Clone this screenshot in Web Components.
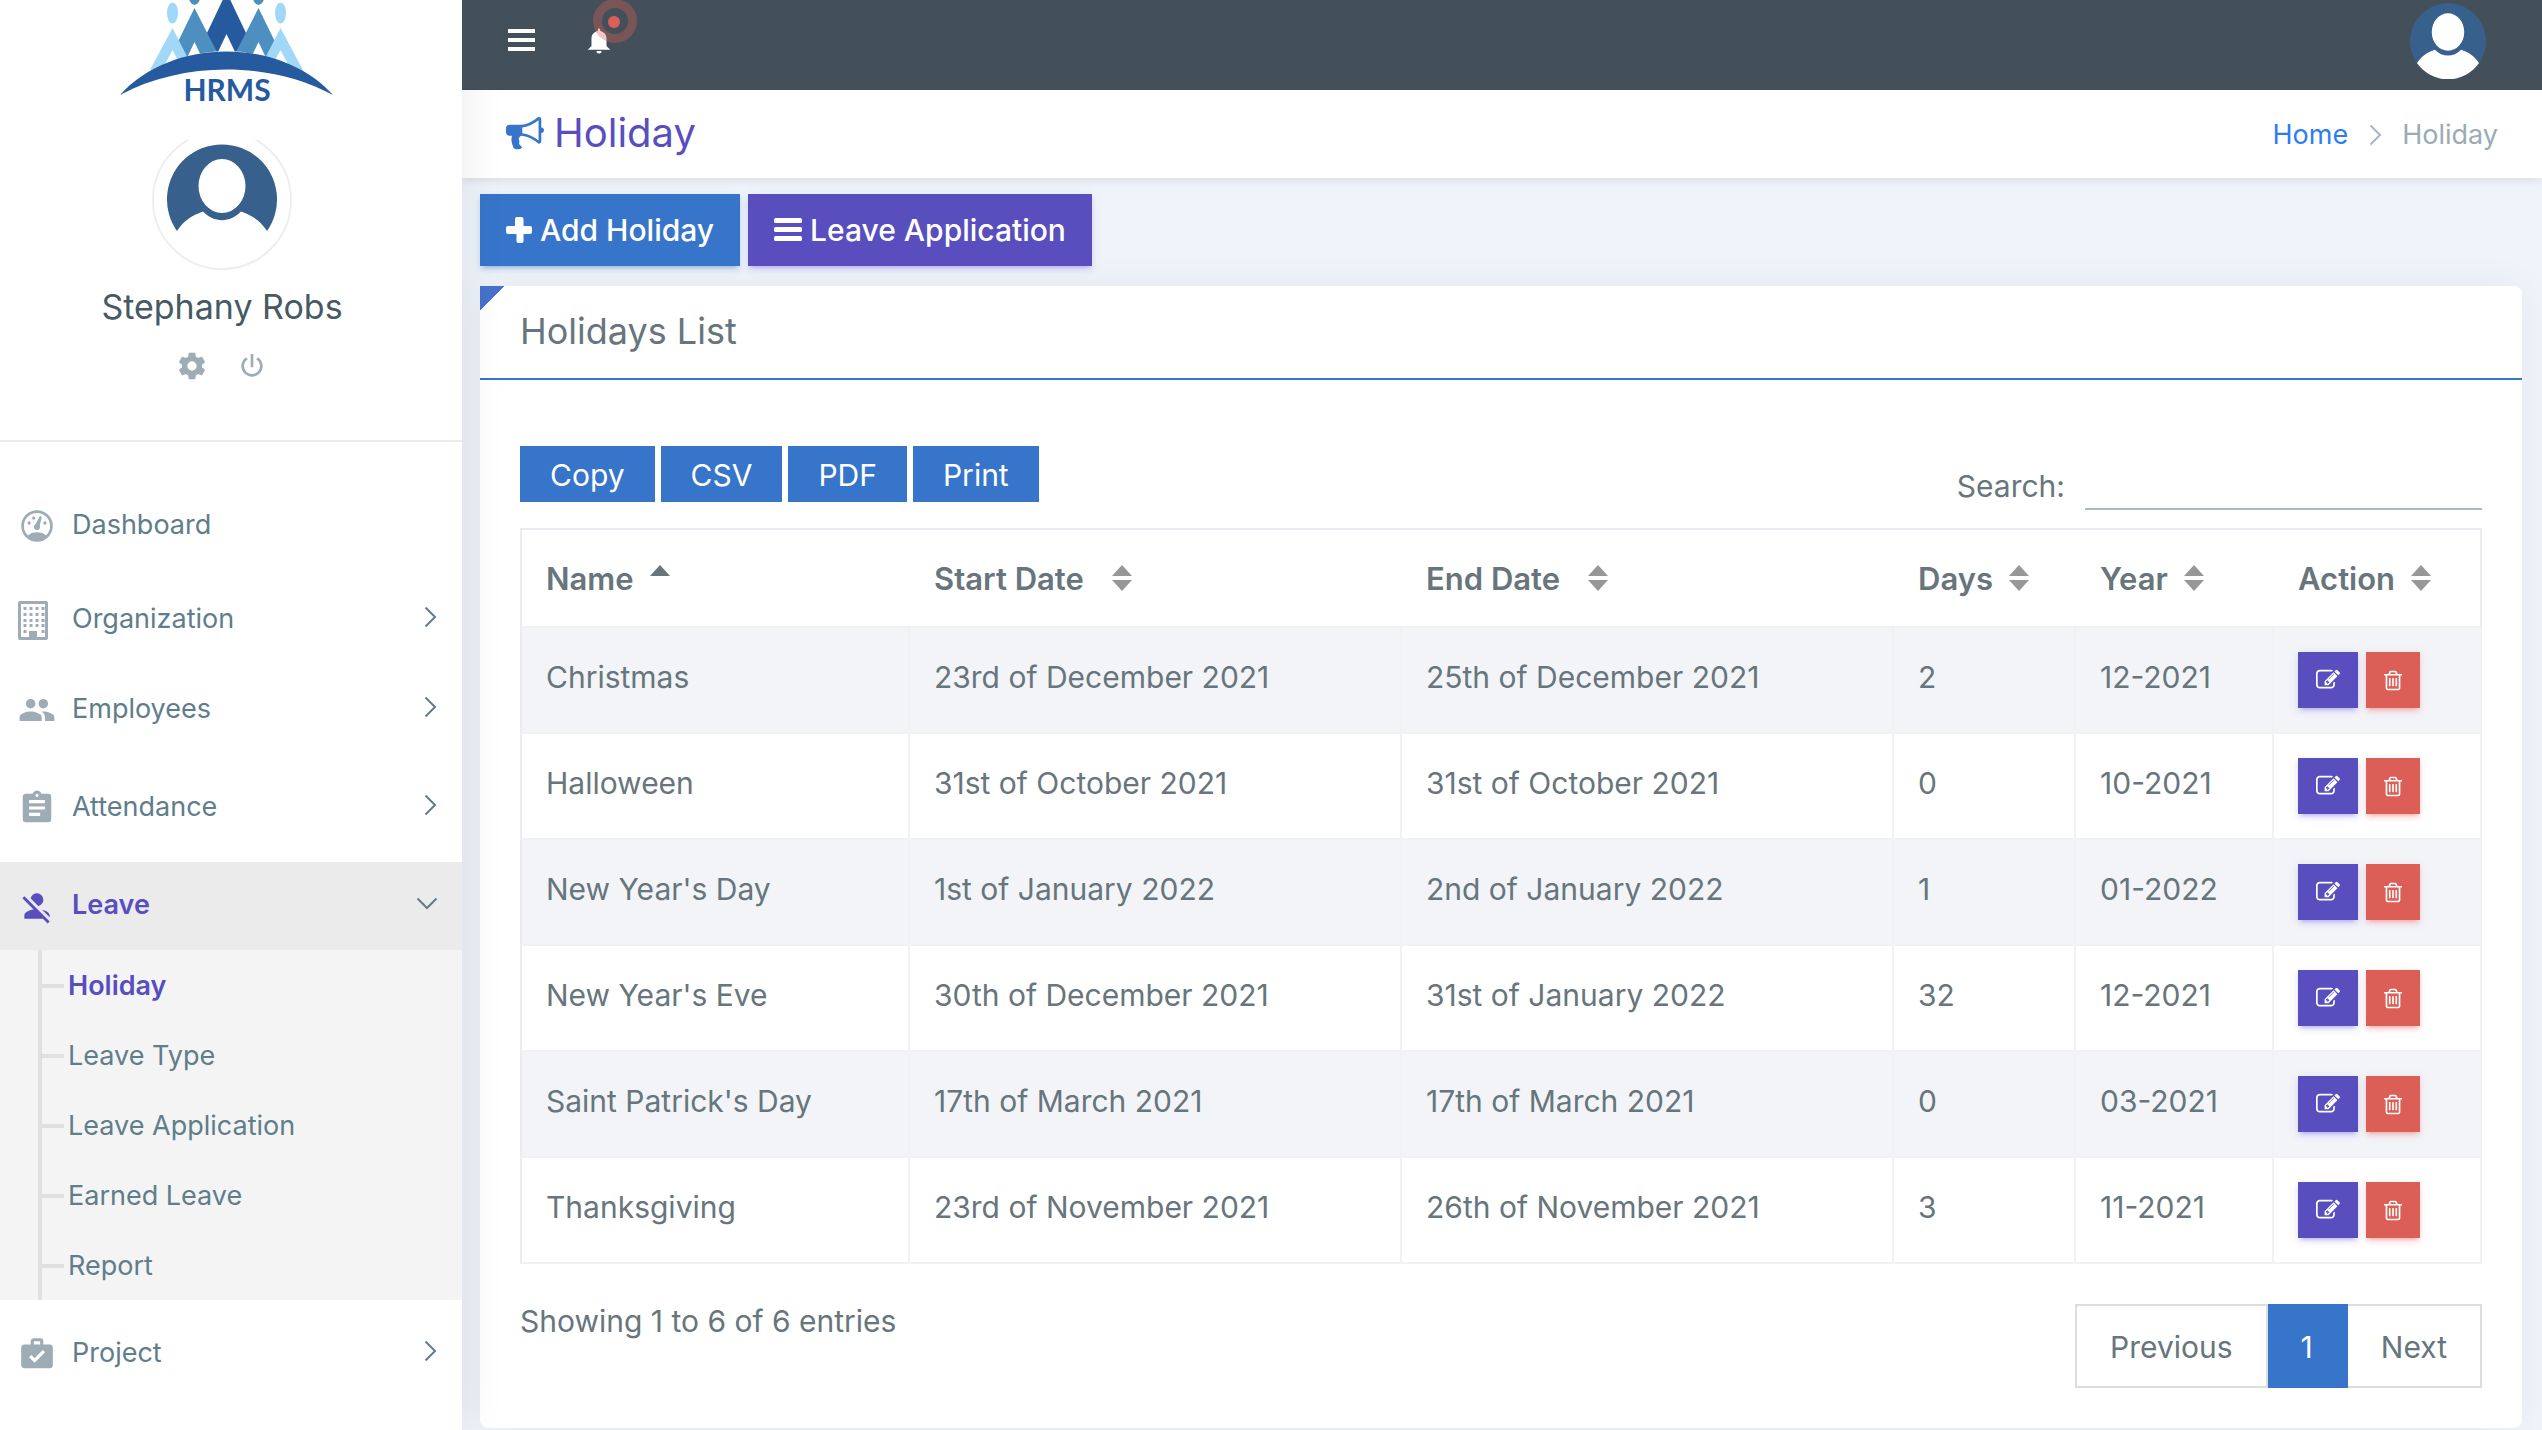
<!DOCTYPE html>
<html lang="en">
<head>
<meta charset="utf-8">
<title>HRMS - Holiday</title>
<style>
  :root {
    --blue: #3775ca;
    --purple: #594ebe;
    --red: #dc5f57;
    --text: #67757c;
    --muted: #99abb4;
    --nav: #607d8b;
  }
  body {
    margin: 0;
    background: #eef4f9;
    color: var(--text);
    font: 400 30px/50px Inter, "Liberation Sans", sans-serif;
  }
</style>
</head>
<body>
<hrms-app></hrms-app>
<script>
const define = (name, html, setup) => {
  const template = document.createElement('template');
  template.innerHTML = html;
  customElements.define(name, class extends HTMLElement {
    connectedCallback() {
      if (this.shadowRoot) return;
      this.attachShadow({ mode: 'open' }).append(template.content.cloneNode(true));
      if (setup) setup(this, this.shadowRoot);
    }
  });
};

const dots = [7, 13, 19, 25].map(x => [6, 12, 18, 23, 29].map(y =>
  (y === 29 && x > 7 && x < 25) ? '' : `<rect x="${x - 3}" y="${y}" width="3" height="3"/>`).join('')).join('');

const ICONS = {
  cog: ['0 0 24 24', '<path d="M12,15.5A3.5,3.5 0 0,1 8.5,12A3.5,3.5 0 0,1 12,8.5A3.5,3.5 0 0,1 15.5,12A3.5,3.5 0 0,1 12,15.5M19.43,12.97C19.47,12.65 19.5,12.33 19.5,12C19.5,11.67 19.47,11.34 19.43,11L21.54,9.37C21.73,9.22 21.78,8.95 21.66,8.73L19.66,5.27C19.54,5.05 19.27,4.96 19.05,5.05L16.56,6.05C16.04,5.66 15.5,5.32 14.87,5.07L14.5,2.42C14.46,2.18 14.25,2 14,2H10C9.75,2 9.54,2.18 9.5,2.42L9.13,5.07C8.5,5.32 7.96,5.66 7.44,6.05L4.95,5.05C4.73,4.96 4.46,5.05 4.34,5.27L2.34,8.73C2.21,8.95 2.27,9.22 2.46,9.37L4.57,11C4.53,11.34 4.5,11.67 4.5,12C4.5,12.33 4.53,12.65 4.57,12.97L2.46,14.63C2.27,14.78 2.21,15.05 2.34,15.27L4.34,18.73C4.46,18.95 4.73,19.03 4.95,18.95L7.44,17.94C7.96,18.34 8.5,18.68 9.13,18.93L9.5,21.58C9.54,21.82 9.75,22 10,22H14C14.25,22 14.46,21.82 14.5,21.58L14.87,18.93C15.5,18.67 16.04,18.34 16.56,17.94L19.05,18.95C19.27,19.03 19.54,18.95 19.66,18.73L21.66,15.27C21.78,15.05 21.73,14.78 21.54,14.63L19.43,12.97Z"/>'],
  power: ['0 0 24 24', '<path d="M16.56,5.44L15.11,6.89C16.84,7.94 18,9.83 18,12A6,6 0 0,1 12,18A6,6 0 0,1 6,12C6,9.83 7.16,7.94 8.88,6.88L7.44,5.44C5.36,6.88 4,9.28 4,12A8,8 0 0,0 12,20A8,8 0 0,0 20,12C20,9.28 18.64,6.88 16.56,5.44M13,3H11V13H13"/>'],
  gauge: ['0 0 24 24', '<circle cx="12" cy="12" r="9.1" fill="none" stroke="currentColor" stroke-width="1.7"/><path d="M5.6 18.6C7.5 16.6 9.6 16 12 16s4.500.6 6.400 2.600A9.200 9.200 0 0 1 5.600 18.600Z"/><circle cx="12" cy="12.600" r="1.900"/><path d="M10.600 12 13.400 6.300a.8.8 0 0 1 1.500.6L13.400 13Z"/><circle cx="7" cy="10.100" r="1.050"/><circle cx="9.900" cy="7" r="1.050"/><circle cx="17" cy="10.100" r="1.050"/>'],
  building: ['0 0 30 39', '<path d="M2 0H28a2 2 0 0 1 2 2V37a2 2 0 0 1-2 2H2a2 2 0 0 1-2-2V2a2 2 0 0 1 2-2ZM3 3V36H11V30H19V36H27V3Z" fill-rule="evenodd"/><g transform="translate(1.500 0)">' + dots + '</g>'],
  people: ['0 0 24 24', '<path d="M16,13C15.71,13 15.38,13 15.03,13.05C16.19,13.89 17,15 17,16.5V19H23V16.5C23,14.17 18.33,13 16,13M8,13C5.67,13 1,14.17 1,16.5V19H15V16.5C15,14.17 10.33,13 8,13M8,11A3,3 0 0,0 11,8A3,3 0 0,0 8,5A3,3 0 0,0 5,8A3,3 0 0,0 8,11M16,11A3,3 0 0,0 19,8A3,3 0 0,0 16,5A3,3 0 0,0 13,8A3,3 0 0,0 16,11Z"/>'],
  clipboard: ['0 0 24 24', '<path d="M17,9H7V7H17M17,13H7V11H17M14,17H7V15H14M12,3A1,1 0 0,1 13,4A1,1 0 0,1 12,5A1,1 0 0,1 11,4A1,1 0 0,1 12,3M19,3H14.82C14.4,1.84 13.3,1 12,1C10.7,1 9.6,1.84 9.18,3H5A2,2 0 0,0 3,5V19A2,2 0 0,0 5,21H19A2,2 0 0,0 21,19V5A2,2 0 0,0 19,3Z"/>'],
  away: ['0 0 24 24', '<path d="M12,4A4,4 0 0,1 16,8C16,9.95 14.6,11.58 12.75,11.93L8.07,7.25C8.42,5.4 10.05,4 12,4M12.28,14L18.28,20L20,21.72L18.73,23L15.73,20H4V18C4,16.16 6.5,14.61 9.87,14.14L2.78,7.05L4.05,5.78L12.28,14M20,18V19.18L15.14,14.32C18,14.93 20,16.35 20,18Z"/>'],
  briefcase: ['0 0 24 24', '<path d="M10,2H14A2,2 0 0,1 16,4V6H20A2,2 0 0,1 22,8V19A2,2 0 0,1 20,21H4C2.89,21 2,20.1 2,19V8C2,6.89 2.89,6 4,6H8V4C8,2.89 8.89,2 10,2M14,6V4H10V6H14M10.5,17.5L17.09,10.91L15.68,9.5L10.5,14.67L8.41,12.59L7,14L10.5,17.5Z"/>'],
  bell: ['0 0 24 24', '<path d="M14,20A2,2 0 0,1 12,22A2,2 0 0,1 10,20H14M12,2A1,1 0 0,1 13,3V4.08C15.84,4.56 18,7.03 18,10V16L21,19H3L6,16V10C6,7.03 8.16,4.56 11,4.08V3A1,1 0 0,1 12,2Z"/>'],
  right: ['0 0 24 24', '<path d="M7.500 2.500 17 12 7.500 21.500" fill="none" stroke="currentColor" stroke-width="2"/>'],
  down: ['0 0 24 24', '<path d="M2.500 7.500 12 17 21.500 7.500" fill="none" stroke="currentColor" stroke-width="2"/>'],
  menu: ['0 0 27 22', '<path d="M0 0H27V4H0ZM0 9H27V13H0ZM0 18H27V22H0Z"/>'],
  bars: ['0 0 28 24', '<rect width="28" height="5" rx="1.500"/><rect y="9" width="28" height="5" rx="1.500"/><rect y="18" width="28" height="5" rx="1.500"/>'],
  plus: ['0 0 26 26', '<path d="M10.500 0h5a2 2 0 0 1 2 2V9H24a2 2 0 0 1 2 2v4a2 2 0 0 1-2 2H17.500V24a2 2 0 0 1-2 2h-3a2 2 0 0 1-2-2V17H2a2 2 0 0 1-2-2V11A2 2 0 0 1 2 9H9V2A2 2 0 0 1 10.500 0Z"/>'],
  horn: ['0 0 1792 1792', '<path d="M1664 640q53 0 90.5 37.5t37.5 90.5-37.5 90.5-90.5 37.5v384q0 52-38 90t-90 38q-417-347-812-380-58 19-91 66t-31 100.5 40 92.5q-20 33-23 65.5t6 58 33.5 55 48 50 61.5 50.5q-29 58-111.5 83t-168.5 11.5-132-55.5q-7-23-29.5-87.5t-32-94.5-23-89-15-101 3.5-98.5 22-110.5h-122q-66 0-113-47t-47-113v-192q0-66 47-113t113-47h480q435 0 896-384 52 0 90 38t38 90v384zm-128 604v-954q-394 302-768 343v270q377 42 768 341z"/>'],
  edit: ['0 0 1792 1792', '<path d="M888 1184l116-116-152-152-116 116v56h96v96h56zm440-720q-16-16-33 1l-350 350q-17 17-1 33t33-1l350-350q17-17 1-33zm80 594v190q0 119-84.5 203.5t-203.5 84.5h-832q-119 0-203.5-84.5t-84.5-203.5v-832q0-119 84.5-203.5t203.5-84.5h832q63 0 117 25 15 7 18 23 3 17-9 29l-49 49q-14 14-32 8-23-6-45-6h-832q-66 0-113 47t-47 113v832q0 66 47 113t113 47h832q66 0 113-47t47-113v-126q0-13 9-22l64-64q15-15 35-7t20 29zm-96-738l288 288-672 672h-288v-288zm444 132l-92 92-288-288 92-92q28-28 68-28t68 28l152 152q28 28 28 68t-28 68z"/>'],
  trash: ['192 128 1408 1536', '<path d="M704 736v576q0 14-9 23t-23 9h-64q-14 0-23-9t-9-23v-576q0-14 9-23t23-9h64q14 0 23 9t9 23zm256 0v576q0 14-9 23t-23 9h-64q-14 0-23-9t-9-23v-576q0-14 9-23t23-9h64q14 0 23 9t9 23zm256 0v576q0 14-9 23t-23 9h-64q-14 0-23-9t-9-23v-576q0-14 9-23t23-9h64q14 0 23 9t9 23zm128 724v-948h-896v948q0 22 7 40.5t14.5 27 10.5 8.5h832q3 0 10.500-8.500t14.500-27 7-40.500zm-672-1076h448l-48-117q-7-9-17-11h-317q-10 2-17 11zm928 32v64q0 14-9 23t-23 9h-96v948q0 83-47 143.500t-113 60.500h-832q-66 0-113-58.500t-47-141.500v-952h-96q-14 0-23-9t-9-23v-64q0-14 9-23t23-9h309l70-167q15-37 54-63t79-26h320q40 0 79 26t54 63l70 167h309q14 0 23 9t9 23z"/>']
};

define('app-icon', `
  <style>
    :host { display: inline-flex; flex: none; width: var(--w, 24px); height: var(--h, var(--w, 24px)); }
    svg { width: 100%; height: 100%; fill: currentColor; display: block; }
  </style>`, (el, root) => {
  const [box, body] = ICONS[el.getAttribute('name')];
  root.innerHTML += `<svg viewBox="${box}" aria-hidden="true">${body}</svg>`;
});

define('hrms-logo', `
  <style>:host { display: block; } svg { display: block; width: 214px; height: 112px; margin-left: 120px; }</style>
  <svg viewBox="120 0 214 112" role="img" aria-label="HRMS">
    <path fill="#265a9f" d="M226.500-8 197 54H256Z"/>
    <g id="side">
      <path fill="#4d8fc1" d="M194.500 8 170 58H220Z"/>
      <path fill="#fff" d="M194.500 42 186 60H203Z"/>
      <path fill="#a1d8f8" d="M172.500 28 150 70H194Z"/>
      <path fill="#fff" d="M172.500 50 164 66H181Z"/>
      <ellipse fill="#4d8fc1" cx="194.500" cy="-5" rx="6" ry="10"/>
      <ellipse fill="#a1d8f8" cx="172.500" cy="13" rx="5.500" ry="10.500"/>
    </g>
    <use href="#side" transform="matrix(-1 0 0 1 453 0)"/>
    <path fill="#fff" d="M226.500 34 217 54H236Z"/>
    <path fill="#fff" d="M140 80Q226 22 313 80V90H140Z"/>
    <path fill="#265a9f" d="M120 95C172 37 281 37 333 95C270 61 183 61 120 95Z"/>
    <text x="227" y="101" text-anchor="middle" font-family="Lato, sans-serif" font-weight="700" font-size="30" fill="#265a9f">HRMS</text>
  </svg>`);

define('user-avatar', `
  <style>
    :host { display: block; flex: none; }
    svg { display: block; width: 100%; height: 100%; }
  </style>
  <svg viewBox="0 0 110 110" role="img" aria-label="User photo">
    <path fill="#fff" d="M10 87A55 55 0 0 0 100 87L84 60H26Z"/>
    <path fill="#37608c" d="M10 87A55 55 0 1 1 100 87C93 76 84 71 74 67.500C63 79 47 79 36 67.500C26 71 17 76 10 87Z"/>
    <ellipse cx="55" cy="42" rx="23.500" ry="27" fill="#fff"/>
  </svg>`);

define('user-card', `
  <style>
    :host { display: flex; flex-direction: column; align-items: center; box-sizing: border-box; height: 302px; padding-right: 18px; border-bottom: 2px solid #ebebeb; }
    .photo { width: 140px; height: 130px; overflow: hidden; display: flex; align-items: flex-end; }
    .ring { box-sizing: border-box; width: 140px; height: 140px; flex: none; border: 2px solid #eee; border-radius: 50%; padding: 12px 13px; }
    .ring user-avatar { width: 110px; height: 110px; }
    h2 { margin: 15px 0 0; font: 400 34px/44px Inter, sans-serif; color: #455a64; }
    nav { display: flex; gap: 28px; margin-top: 21px; color: #9eadb5; --w: 32px; }
    a { color: inherit; display: flex; }
  </style>
  <div class="photo"><div class="ring"><user-avatar></user-avatar></div></div>
  <h2>Stephany Robs</h2>
  <nav><a href="#settings" aria-label="Settings"><app-icon name="cog"></app-icon></a><a href="#logout" aria-label="Log out"><app-icon name="power"></app-icon></a></nav>`);

define('side-item', `
  <style>
    :host { display: block; margin-bottom: 10px; font-size: 27px; line-height: 46px; color: var(--nav); }
    a { display: flex; align-items: flex-start; box-sizing: border-box; height: 88px; padding: 20px 20px 0 18px; color: inherit; text-decoration: none; }
    :host([icon="gauge"]) a { height: 84px; }
    :host([icon="building"]) a { height: 80px; }
    .icon { width: 38px; height: 48px; margin-right: 16px; display: flex; align-items: center; justify-content: center; color: #9eadb5; --w: 38px; }
    :host([icon="building"]) .icon { --w: 30px; --h: 39px; justify-content: flex-start; }
    .label { flex: 1; }
    .arrow { height: 42px; display: flex; align-items: center; --w: 24px; }
    :host([open]) a { background: #ebebeb; }
    :host([open]) .label { font-weight: 600; }
    :host([open]) .label, :host([open]) .icon { color: var(--purple); }
    :host([open]) .arrow { padding-right: 3px; }
  </style>
  <a href="#"><span class="icon"></span><span class="label"><slot></slot></span><span class="arrow"></span></a>
  <slot name="menu"></slot>`, (el, root) => {
  const icon = name => { const i = document.createElement('app-icon'); i.setAttribute('name', name); return i; };
  root.querySelector('.icon').append(icon(el.getAttribute('icon')));
  if (!el.hasAttribute('leaf')) root.querySelector('.arrow').append(icon(el.hasAttribute('open') ? 'down' : 'right'));
});

define('sub-menu', `
  <style>
    :host { display: block; background: #f4f4f4; padding-left: 38px; }
    .list { border-left: 4px solid #e0e0e0; }
  </style>
  <div class="list"><slot></slot></div>`);

define('sub-item', `
  <style>
    :host { display: block; }
    a { display: flex; align-items: center; gap: 4px; height: 70px; padding-top: 2px; box-sizing: border-box; color: var(--nav); text-decoration: none; }
    a::before { content: ""; width: 22px; height: 4px; background: #e0e0e0; }
    :host([active]) a { color: var(--purple); font-weight: 600; }
  </style>
  <a href="#"><slot></slot></a>`);

define('hrms-sidebar', `
  <style>
    :host { display: block; flex: none; width: 462px; background: #fff; box-shadow: 2px 0 40px rgba(0,0,0,.08); position: relative; z-index: 1; }
    header { height: 140px; }
    nav { padding-top: 40px; }
  </style>
  <header><hrms-logo></hrms-logo></header>
  <user-card></user-card>
  <nav>
    <side-item icon="gauge" leaf>Dashboard</side-item>
    <side-item icon="building">Organization</side-item>
    <side-item icon="people">Employees</side-item>
    <side-item icon="clipboard">Attendance</side-item>
    <side-item icon="away" open>Leave
      <sub-menu slot="menu">
        <sub-item active>Holiday</sub-item>
        <sub-item>Leave Type</sub-item>
        <sub-item>Leave Application</sub-item>
        <sub-item>Earned Leave</sub-item>
        <sub-item>Report</sub-item>
      </sub-menu>
    </side-item>
    <side-item icon="briefcase">Project</side-item>
  </nav>`);

define('top-bar', `
  <style>
    :host { display: flex; align-items: flex-start; box-sizing: border-box; height: 90px; padding: 0 56px 0 46px; background: #445059; border-bottom: 1px solid #434a5b; position: relative; z-index: 2; color: #fff; }
    button { border: 0; padding: 0; background: none; color: inherit; display: flex; }
    .menu { --w: 27px; --h: 22px; margin-top: 29px; }
    .bell { position: relative; margin: 26px 0 0 49px; --w: 30px; }
    .ring, .dot { position: absolute; border-radius: 50%; }
    .ring { box-sizing: border-box; width: 44px; height: 44px; left: 9px; top: -27px; border: 9px solid rgba(220,95,87,.35); }
    .dot { width: 12px; height: 12px; left: 24px; top: -10px; background: var(--red); }
    .me { margin: 3px 0 0 auto; }
    user-avatar { width: 76px; height: 76px; }
  </style>
  <button class="menu" aria-label="Menu"><app-icon name="menu"></app-icon></button>
  <button class="bell" aria-label="Notifications"><app-icon name="bell"></app-icon><span class="ring"></span><span class="dot"></span></button>
  <button class="me" aria-label="Account"><user-avatar></user-avatar></button>`);

define('page-title', `
  <style>
    :host { display: flex; align-items: center; justify-content: space-between; height: 88px; padding: 0 44px; background: #fff; box-shadow: 0 2px 10px rgba(0,0,0,.1); }
    h1 { display: flex; align-items: center; gap: 10px; margin: 0; padding-bottom: 2px; font: 400 40px/48px Inter, sans-serif; color: var(--purple); }
    app-icon { --w: 38px; color: var(--blue); }
    ol { display: flex; align-items: center; gap: 15px; margin: 0; padding: 2px 0 0; list-style: none; font-size: 27px; color: var(--muted); }
    a { color: #2f7bf6; text-decoration: none; }
    li { display: flex; align-items: center; }
    li app-icon { --w: 24px; color: #a6b7bf; }
  </style>
  <h1><app-icon name="horn"></app-icon>Holiday</h1>
  <ol><li><a href="#home">Home</a></li><li><app-icon name="right"></app-icon></li><li>Holiday</li></ol>`);

define('action-button', `
  <style>
    :host { display: block; --tint: 55,117,202; --bg: var(--blue); }
    :host([tone="purple"]) { --tint: 116,96,238; --bg: var(--purple); }
    :host([tone="red"]) { --tint: 239,83,80; --bg: var(--red); }
    button { display: flex; align-items: center; justify-content: center; gap: 8px; box-sizing: border-box; height: 72px; padding: 0 26px; border: 0; background: var(--bg); color: #fff; font: 500 30px/48px Inter, sans-serif;
      box-shadow: 0 4px 4px rgba(var(--tint),.14), 0 6px 2px -4px rgba(var(--tint),.2), 0 2px 10px rgba(var(--tint),.12); }
    :host([small]) button { height: 56px; padding: 0 18px; }
    app-icon { --w: 26px; }
    app-icon[name="bars"] { --w: 28px; --h: 24px; }
    :host([small]) app-icon { --w: 24px; }
    :host([small]) app-icon[name="trash"] { --w: 18px; --h: 21px; }
  </style>
  <button type="button"><slot></slot></button>`, (el, root) => {
  const button = root.querySelector('button');
  const icon = document.createElement('app-icon');
  icon.setAttribute('name', el.getAttribute('icon'));
  button.prepend(icon);
  if (el.hasAttribute('small')) { button.setAttribute('aria-label', el.getAttribute('label')); root.querySelector('slot').remove(); }
});

define('panel-card', `
  <style>
    :host { display: block; background: #fff; border-radius: 0 8px 8px 8px; box-shadow: 0 0 40px rgba(0,0,0,.05); }
    header { box-sizing: border-box; height: 94px; padding: 20px 40px 0; border-bottom: 2px solid var(--blue); background: linear-gradient(135deg, #4672cc 17px, transparent 17px) no-repeat 0 0 / 24px 24px; }
    h2 { margin: 0; font: 400 36px/50px Inter, sans-serif; color: var(--text); }
    .body { padding: 66px 40px 40px; }
  </style>
  <header><h2><slot name="title"></slot></h2></header>
  <div class="body"><slot></slot></div>`);

define('export-bar', `
  <style>
    :host { display: flex; gap: 6px; height: 56px; }
    button { height: 56px; border: 0; padding: 2px 30px 0; background: var(--blue); color: #fff; font: inherit; }
  </style>
  <button type="button">Copy</button><button type="button">CSV</button><button type="button">PDF</button><button type="button">Print</button>`);

define('search-box', `
  <style>
    :host { display: block; line-height: 48px; }
    label { display: flex; align-items: flex-end; gap: 20px; }
    input { box-sizing: border-box; width: 397px; height: 48px; margin: 0; padding: 0 8px; border: 0; border-bottom: 2px solid #afb8bb; outline: 0; background: none; color: inherit; font: inherit; }
  </style>
  <label for="q">Search: <input id="q" type="search"></label>`);

const HOLIDAYS = [
  ['Christmas', '23rd of December 2021', '25th of December 2021', '2', '12-2021'],
  ['Halloween', '31st of October 2021', '31st of October 2021', '0', '10-2021'],
  ["New Year's Day", '1st of January 2022', '2nd of January 2022', '1', '01-2022'],
  ["New Year's Eve", '30th of December 2021', '31st of January 2022', '32', '12-2021'],
  ["Saint Patrick's Day", '17th of March 2021', '17th of March 2021', '0', '03-2021'],
  ['Thanksgiving', '23rd of November 2021', '26th of November 2021', '3', '11-2021']
];

define('holiday-table', `
  <style>
    :host { display: block; }
    table { width: 100%; table-layout: fixed; border-collapse: separate; border-spacing: 0; }
    th, td { box-sizing: border-box; padding: 24px 24px 0; text-align: left; vertical-align: top; white-space: nowrap; border-bottom: 2px solid #f1f2f4; }
    th { height: 100px; border-top: 2px solid #e9ebf0; font-size: 31px; font-weight: 600; }
    td { height: 106px; border-right: 2px solid #f1f1f2; }
    th:first-child, td:first-child { border-left: 2px solid #ececf0; }
    th:last-child { border-right: 2px solid #ececf0; }
    tbody tr:nth-child(odd) { background: #f2f4f8; }
    .name { width: 390px; } .days { width: 182px; } .year { width: 198px; } .act { width: 208px; }
    .sort { display: inline-flex; vertical-align: top; flex-direction: column; gap: 4px; margin: 11px 0 0 16px; }
    .wide .sort { margin-left: 28px; }
    .sort i { width: 0; border: solid transparent; border-width: 0 10px; }
    .sort .up { border-bottom: 11px solid #979797; }
    .sort .dn { border-top: 11px solid #979797; }
    .asc .up { border-bottom-color: var(--text); }
    .asc .dn { visibility: hidden; }
    .tools { display: flex; gap: 8px; }
  </style>
  <table>
    <colgroup><col class="name"><col><col><col class="days"><col class="year"><col class="act"></colgroup>
    <thead><tr></tr></thead>
    <tbody></tbody>
  </table>`, (el, root) => {
  root.querySelector('thead tr').innerHTML = [['Name', 'asc'], ['Start Date', 'wide'], ['End Date', 'wide'], ['Days', ''], ['Year', ''], ['Action', '']]
    .map(([t, c]) => `<th scope="col" class="${c}">${t}<span class="sort"><i class="up"></i><i class="dn"></i></span></th>`).join('');
  root.querySelector('tbody').innerHTML = HOLIDAYS.map(r => `<tr>${r.map(c => `<td>${c}</td>`).join('')}<td><div class="tools"><action-button small tone="purple" icon="edit" label="Edit"></action-button><action-button small tone="red" icon="trash" label="Delete"></action-button></div></td></tr>`).join('');
});

define('table-pager', `
  <style>
    :host { display: flex; }
    a { box-sizing: border-box; height: 84px; padding: 16px 33px; border: 2px solid #ddd; color: var(--text); text-decoration: none; }
    a + a { border-left: 0; }
    a.on { background: var(--blue); border-color: var(--blue); color: #fff; }
  </style>
  <a href="#prev">Previous</a><a href="#1" class="on" aria-current="page">1</a><a href="#next">Next</a>`);

define('hrms-app', `
  <style>
    :host { display: flex; min-height: 100vh; }
    main { flex: 1; min-width: 0; display: flex; flex-direction: column; }
    .content { padding: 16px 20px 2px 18px; }
    .actions { display: flex; gap: 8px; margin-bottom: 20px; }
    .tools { display: flex; justify-content: space-between; align-items: flex-start; margin-bottom: 18px; }
    .tools search-box { padding-top: 16px; }
    .foot { display: flex; justify-content: space-between; align-items: flex-start; padding-top: 32px; }
    .foot table-pager { padding-top: 8px; }
  </style>
  <hrms-sidebar></hrms-sidebar>
  <main>
    <top-bar></top-bar>
    <page-title></page-title>
    <div class="content">
      <div class="actions">
        <action-button icon="plus">Add Holiday</action-button>
        <action-button icon="bars" tone="purple">Leave Application</action-button>
      </div>
      <panel-card>
        <span slot="title">Holidays List</span>
        <div class="tools"><export-bar></export-bar><search-box></search-box></div>
        <holiday-table></holiday-table>
        <div class="foot"><div class="info">Showing 1 to 6 of 6 entries</div><table-pager></table-pager></div>
      </panel-card>
    </div>
  </main>`);
</script>
</body>
</html>
